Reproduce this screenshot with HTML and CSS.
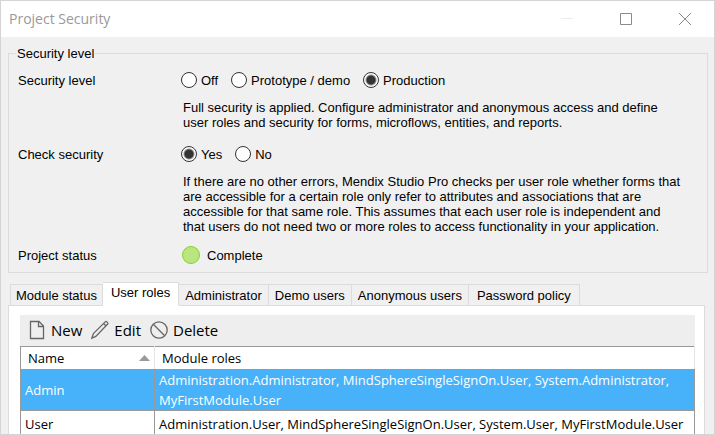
FILE: index.html
```html
<!DOCTYPE html>
<html lang="en">
<head>
<meta charset="utf-8">
<title>Project Security</title>
<link rel="stylesheet" href="styles.css">
</head>
<body>
<main class="window">
  <header class="titlebar">
    <h1 class="title">Project Security</h1>
    <div class="controls">
      <button type="button" class="control minimize" aria-label="Minimize" disabled><svg width="12" height="12" viewBox="0 0 12 12"><path d="M0 5.5h12"/></svg></button>
      <button type="button" class="control" aria-label="Maximize"><svg width="12" height="12" viewBox="0 0 12 12"><path d="M.5.5h11v11H.5z"/></svg></button>
      <button type="button" class="control" aria-label="Close"><svg width="12" height="12" viewBox="0 0 12 12"><path d="M0 0l12 12M12 0L0 12"/></svg></button>
    </div>
  </header>

  <div class="content">
    <fieldset class="group">
      <legend>Security level</legend>
      <div class="row">
        <span class="caption" id="level">Security level</span>
        <div class="radios" role="radiogroup" aria-labelledby="level">
          <label class="radio"><input type="radio" name="level">Off</label>
          <label class="radio"><input type="radio" name="level">Prototype / demo</label>
          <label class="radio"><input type="radio" name="level" checked>Production</label>
        </div>
      </div>
      <p class="hint">Full security is applied. Configure administrator and anonymous access and define<br>user roles and security for forms, microflows, entities, and reports.</p>
      <div class="row">
        <span class="caption" id="check">Check security</span>
        <div class="radios" role="radiogroup" aria-labelledby="check">
          <label class="radio"><input type="radio" name="check" checked>Yes</label>
          <label class="radio"><input type="radio" name="check">No</label>
        </div>
      </div>
      <p class="hint">If there are no other errors, Mendix Studio Pro checks per user role whether forms that<br>are accessible for a certain role only refer to attributes and associations that are<br>accessible for that same role. This assumes that each user role is independent and<br>that users do not need two or more roles to access functionality in your application.</p>
      <div class="row">
        <span class="caption">Project status</span>
        <div class="status"><span class="dot"></span>Complete</div>
      </div>
    </fieldset>

    <div class="tabs" role="tablist">
      <button type="button" class="tab" role="tab">Module status</button>
      <button type="button" class="tab active" role="tab" aria-selected="true">User roles</button>
      <button type="button" class="tab" role="tab">Administrator</button>
      <button type="button" class="tab" role="tab">Demo users</button>
      <button type="button" class="tab" role="tab">Anonymous users</button>
      <button type="button" class="tab" role="tab">Password policy</button>
    </div>
    <section class="panel" role="tabpanel">
      <div class="toolbar">
        <button type="button" class="tool"><svg width="18" height="20" viewBox="0 0 18 20"><path d="M2.5 1.5h8.5l4.5 4.5v12.5h-13zM10.5 1.5v5h5"/></svg>New</button>
        <button type="button" class="tool"><svg width="18" height="20" viewBox="0 0 18 20"><path d="M.8 18.2l1.6-4.6L14.2 1.9q.8-.8 1.6 0l.7.7q.8.8 0 1.6L4.8 16.4zM12.6 3.5l2.3 2.3"/></svg>Edit</button>
        <button type="button" class="tool"><svg width="18" height="20" viewBox="1 0 18 20"><circle cx="10" cy="10" r="8.2"/><path d="M4.3 4.3l11.4 11.4"/></svg>Delete</button>
      </div>
      <table class="roles">
        <thead>
          <tr><th class="name"><span class="sort">Name<svg width="11" height="6" viewBox="0 0 11 6"><path d="M5.5 0L11 6H0z"/></svg></span></th><th>Module roles</th></tr>
        </thead>
        <tbody>
          <tr class="selected"><td>Admin</td><td>Administration.Administrator, MindSphereSingleSignOn.User, System.Administrator,<br>MyFirstModule.User</td></tr>
          <tr><td>User</td><td>Administration.User, MindSphereSingleSignOn.User, System.User, MyFirstModule.User</td></tr>
        </tbody>
      </table>
    </section>
  </div>
</main>
</body>
</html>
```
FILE: styles.css
```css
* { box-sizing: border-box; }

body {
  margin: 0;
  font: 13px/15px "Liberation Sans", Arial, sans-serif;
  color: #000;
}

button {
  font: inherit;
  color: inherit;
  margin: 0;
  padding: 0;
  border: 0;
  background: none;
}

svg { display: block; flex: none; }

.window {
  display: flex;
  flex-direction: column;
  height: 100vh;
  overflow: hidden;
  border: 1px solid #d4d4d4;
  background: #f0f0f0;
}

.titlebar {
  display: flex;
  flex: none;
  align-items: center;
  justify-content: space-between;
  height: 36px;
  padding: 0 23px 0 8px;
  background: #fff;
}

.title {
  margin: 0;
  font: 14px/20px "Open Sans", "Noto Sans", sans-serif;
  color: #999;
}

.controls { display: flex; gap: 47px; }

.control svg { fill: none; stroke: #8a8a8a; }
.minimize svg { stroke: #ececec; }

.content {
  flex: 1;
  display: flex;
  flex-direction: column;
  min-height: 0;
  padding: 9px 6px 0 7px;
}

.group {
  flex: none;
  margin: 0;
  padding: 10px 8px 8px 9px;
  border: 1px solid #dcdcdc;
}

.group legend { margin-left: -2px; padding: 0 1px; }

.row { display: flex; align-items: center; min-height: 18px; }
.caption { width: 163px; }
.radios { display: flex; gap: 13px; }
.radio { display: flex; align-items: center; gap: 4px; }

.radio input {
  appearance: none;
  width: 16px;
  height: 16px;
  margin: 0;
  border: 1px solid #333;
  border-radius: 50%;
  background: #fff;
}

.radio input:checked {
  background: radial-gradient(circle, #333 0 4px, #fff 6px);
}

.hint { margin: 11px 0 15px 165px; white-space: nowrap; }
.hint:nth-last-child(2) { margin-bottom: 12px; }

.status { display: flex; align-items: center; gap: 7px; padding-left: 1px; }

.dot {
  width: 18px;
  height: 18px;
  border: 1px solid #86d327;
  border-radius: 50%;
  background: #b9e680;
}

.tabs {
  position: relative;
  z-index: 1;
  display: flex;
  flex: none;
  align-items: flex-end;
  height: 24px;
  margin-top: 9px;
  padding-left: 2px;
}

.tab {
  height: 22px;
  padding: 0 6px;
  border: 1px solid #dcdcdc;
  border-left-width: 0;
  white-space: nowrap;
}

.tab:first-child { padding: 0 5px; border-left-width: 1px; }
.tab:last-child { padding: 0 8px; }

.tab.active {
  height: 24px;
  padding: 0 8px 3px;
  border-bottom-color: #fff;
  background: #fff;
}

.panel {
  flex: 1;
  min-height: 0;
  margin: -1px 3px 0 0;
  padding: 9px 9px 0 11px;
  border: 1px solid #dcdcdc;
  border-bottom: 0;
  background: #fff;
  overflow: hidden;
}

.toolbar {
  display: flex;
  gap: 9px;
  height: 31px;
  padding: 0 8px 1px;
  background: #eee;
}

.tool {
  display: flex;
  align-items: center;
  gap: 5px;
  font: 15px/20px "Open Sans", "Noto Sans", sans-serif;
}

.tool svg { fill: none; stroke: #666; stroke-width: 1.3; }

.roles {
  width: 100%;
  border-collapse: collapse;
  font: 13px/20px "Open Sans", "Noto Sans", sans-serif;
}

.roles th, .roles td {
  height: 26px;
  padding: 0 4px;
  border: 1px solid #999;
  text-align: left;
  font-weight: normal;
  white-space: nowrap;
}

.roles th {
  height: 23px;
  padding: 0 7px;
  border-right-color: #e4e4e4;
}

.roles .name { width: 134px; padding-right: 4px; }
.sort { display: flex; align-items: center; justify-content: space-between; }
.sort svg { fill: #999; }

.selected { background: #47b1fa; color: #fff; }
```
